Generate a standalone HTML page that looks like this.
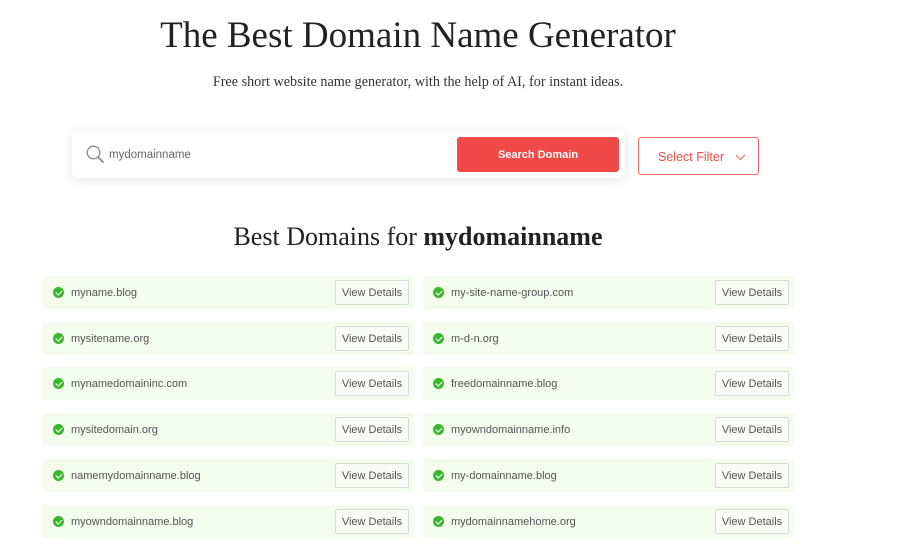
<!DOCTYPE html>
<html><head><style>
body{margin:0;width:910px;height:549px;background:#fff;position:relative;overflow:hidden;font-family:"Liberation Sans",sans-serif}
.a{position:absolute}
h1{position:absolute;left:0;width:836px;top:14px;margin:0;text-align:center;font:400 37px "Liberation Serif",serif;color:#222}
.sub{left:0;width:836px;top:74px;text-align:center;font:14.2px "Liberation Serif",serif;color:#333}
.box{left:72px;top:131px;width:553px;height:47px;background:#fff;border-radius:7px;box-shadow:0 2px 12px rgba(0,0,0,.1)}
.btn{left:457px;top:137px;width:162px;height:35px;background:#ef4a48;border-radius:3px;color:#fff;font-size:11px;font-weight:bold;text-align:center;line-height:36px}
.flt{left:638px;top:137px;width:121px;height:38px;border:1px solid #ef6b68;border-radius:3px;color:#ef4a48;font-size:12.5px;line-height:38px;box-sizing:border-box;padding-left:19px}
h2{position:absolute;left:0;width:836px;top:222px;margin:0;text-align:center;font:400 26px "Liberation Serif",serif;color:#222}
.row{position:absolute;width:371px;height:33px;background:#f4fcee;font-size:11px;color:#555}
.row .c{position:absolute;left:10px;top:11px;width:11px;height:11px;border-radius:50%;background:#3bb72e}
.row .c:after{content:"";position:absolute;left:3.5px;top:2px;width:2.5px;height:5px;border:solid #fff;border-width:0 1.5px 1.5px 0;transform:rotate(45deg)}
.row .t{position:absolute;left:28px;top:11px}
.row .v{position:absolute;left:292px;top:4px;width:72px;height:23px;border:1px solid #d8ddd4;border-radius:2px;background:#f9fcf6;text-align:center;line-height:24px;color:#555}
</style></head><body>
<h1>The Best Domain Name Generator</h1>
<div class="a sub">Free short website name generator, with the help of AI, for instant ideas.</div>
<div class="a box">
<svg class="a" style="left:14px;top:14px" width="19" height="19" viewBox="0 0 19 19"><circle cx="7.5" cy="7.5" r="6.3" fill="none" stroke="#888" stroke-width="1.3"/><path d="M12 12l5.5 5.5" stroke="#888" stroke-width="1.6"/></svg>
<div class="a" style="left:37px;top:18px;font-size:11.5px;color:#666">mydomainname</div>
</div>
<div class="a btn">Search Domain</div>
<div class="a flt">Select Filter<svg class="a" style="left:96px;top:16px" width="11" height="7" viewBox="0 0 11 7"><path d="M1 1l4.5 4.5L10 1" fill="none" stroke="#ef6b68" stroke-width="1.2"/></svg></div>
<h2>Best Domains for <b>mydomainname</b></h2>
<div class="row" style="left:43px;top:276px"><i class="c"></i><span class="t">myname.blog</span><span class="v">View Details</span></div>
<div class="row" style="left:423px;top:276px"><i class="c"></i><span class="t">my-site-name-group.com</span><span class="v">View Details</span></div>
<div class="row" style="left:43px;top:322px"><i class="c"></i><span class="t">mysitename.org</span><span class="v">View Details</span></div>
<div class="row" style="left:423px;top:322px"><i class="c"></i><span class="t">m-d-n.org</span><span class="v">View Details</span></div>
<div class="row" style="left:43px;top:367px"><i class="c"></i><span class="t">mynamedomaininc.com</span><span class="v">View Details</span></div>
<div class="row" style="left:423px;top:367px"><i class="c"></i><span class="t">freedomainname.blog</span><span class="v">View Details</span></div>
<div class="row" style="left:43px;top:413px"><i class="c"></i><span class="t">mysitedomain.org</span><span class="v">View Details</span></div>
<div class="row" style="left:423px;top:413px"><i class="c"></i><span class="t">myowndomainname.info</span><span class="v">View Details</span></div>
<div class="row" style="left:43px;top:459px"><i class="c"></i><span class="t">namemydomainname.blog</span><span class="v">View Details</span></div>
<div class="row" style="left:423px;top:459px"><i class="c"></i><span class="t">my-domainname.blog</span><span class="v">View Details</span></div>
<div class="row" style="left:43px;top:505px"><i class="c"></i><span class="t">myowndomainname.blog</span><span class="v">View Details</span></div>
<div class="row" style="left:423px;top:505px"><i class="c"></i><span class="t">mydomainnamehome.org</span><span class="v">View Details</span></div>
</body></html>
